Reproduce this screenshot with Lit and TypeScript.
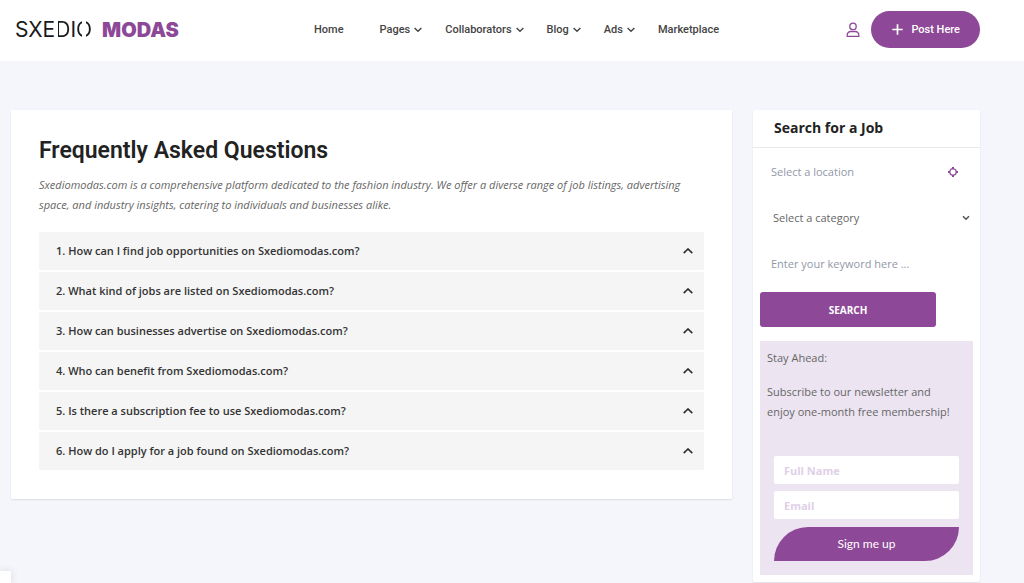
import { LitElement, html, css, svg } from "lit";
import { customElement, property } from "lit/decorators.js";
import { classMap } from "lit/directives/class-map.js";

interface NavEntry {
  label: string;
  menu?: boolean;
}

const NAV: NavEntry[] = [
  { label: "Home" },
  { label: "Pages", menu: true },
  { label: "Collaborators", menu: true },
  { label: "Blog", menu: true },
  { label: "Ads", menu: true },
  { label: "Marketplace" },
];

const QUESTIONS = [
  "1. How can I find job opportunities on Sxediomodas.com?",
  "2. What kind of jobs are listed on Sxediomodas.com?",
  "3. How can businesses advertise on Sxediomodas.com?",
  "4. Who can benefit from Sxediomodas.com?",
  "5. Is there a subscription fee to use Sxediomodas.com?",
  "6. How do I apply for a job found on Sxediomodas.com?",
];

const chevronDown = svg`<path d="M0.6 1 4 4.3 7.4 1" fill="none" stroke="currentColor" stroke-width="1.4"/>`;

@customElement("site-header")
export class SiteHeader extends LitElement {
  static styles = css`
    :host {
      display: block;
      background: #fff;
    }
    .bar {
      display: flex;
      align-items: center;
      height: 61px;
      padding: 0 44px 2px 15px;
      box-sizing: border-box;
    }
    a {
      color: inherit;
      text-decoration: none;
    }
    .logo {
      display: flex;
      align-items: center;
      gap: 10px;
      width: 299px;
      white-space: nowrap;
    }
    .thin {
      font: 400 21px/24px Inter, sans-serif;
      color: #1a1a1a;
    }
    /* The D loses its stem and the O is split in two, as in the brand mark. */
    .open,
    .split {
      color: transparent;
      background-clip: text;
      -webkit-background-clip: text;
    }
    .open {
      background-image: linear-gradient(90deg, transparent 22%, #1a1a1a 22%);
    }
    .split {
      background-image: linear-gradient(90deg, #1a1a1a 40%, transparent 40%, transparent 60%, #1a1a1a 60%);
    }
    .heavy {
      font: 900 20px/24px Inter, sans-serif;
      color: #8d4897;
    }
    nav {
      display: flex;
      gap: 23px;
      padding-top: 1px;
      font: 500 11px/16px Roboto, sans-serif;
      color: #444;
      white-space: nowrap;
    }
    .entry {
      display: flex;
      align-items: center;
      gap: 4px;
    }
    .first {
      margin-right: 13px;
    }
    .chevron {
      width: 8px;
      height: 6px;
    }
    .actions {
      display: flex;
      align-items: center;
      gap: 11px;
      margin-left: auto;
      color: #8d4897;
    }
    .account {
      display: flex;
    }
    .post {
      display: flex;
      align-items: center;
      justify-content: center;
      gap: 8px;
      height: 37px;
      padding: 0 20px 0 21px;
      border: 0;
      border-radius: 19px;
      background: #8d4897;
      color: #fff;
      font: 500 11px/16px Roboto, sans-serif;
      white-space: nowrap;
    }
  `;

  render() {
    return html`
      <header class="bar">
        <a class="logo" href="#">
          <span class="thin">SXE<span class="open">D</span>I<span class="split">O</span></span>
          <span class="heavy">MODAS</span>
        </a>
        <nav>
          ${NAV.map(
            (n, i) => html`<a class=${classMap({ entry: true, first: i === 0 })} href="#"
              >${n.label}${n.menu
                ? html`<svg class="chevron" viewBox="0 0 8 6" aria-hidden="true">${chevronDown}</svg>`
                : ""}</a
            >`
          )}
        </nav>
        <div class="actions">
          <a class="account" href="#" aria-label="Account">
            <svg width="14" height="16" viewBox="0 0 14 16" fill="none" stroke="currentColor" stroke-width="1.3">
              <circle cx="7" cy="4.4" r="3.2" />
              <path d="M1.2 14.4v-1.3a3.6 3.6 0 0 1 3.6-3.6h4.4a3.6 3.6 0 0 1 3.6 3.6v1.3z" stroke-linejoin="round" />
            </svg>
          </a>
          <button class="post">
            <svg width="11" height="11" viewBox="0 0 11 11" stroke="currentColor" stroke-width="1.7" aria-hidden="true">
              <path d="M5.5 0.3v10.4M0.3 5.5h10.4" />
            </svg>
            Post Here
          </button>
        </div>
      </header>
    `;
  }
}

@customElement("faq-item")
export class FaqItem extends LitElement {
  @property() question = "";

  static styles = css`
    :host {
      display: block;
    }
    .row {
      display: flex;
      align-items: center;
      justify-content: space-between;
      width: 100%;
      height: 38px;
      padding: 0 11px 0 17px;
      border: 0;
      border-radius: 1px;
      background: #f5f5f5;
      color: #333;
      font: 600 11px/18px "Open Sans", sans-serif;
      text-align: left;
    }
  `;

  render() {
    return html`
      <button class="row" aria-expanded="false">
        <span>${this.question}</span>
        <svg width="10" height="6" viewBox="0 0 10 6" aria-hidden="true">
          <path d="M0.7 5.2 5 1 9.3 5.2" fill="none" stroke="currentColor" stroke-width="1.7" />
        </svg>
      </button>
    `;
  }
}

@customElement("job-search")
export class JobSearch extends LitElement {
  static styles = css`
    :host {
      display: block;
      background: #fff;
      border-radius: 2px;
      box-shadow: 0 1px 2px rgba(0, 0, 0, 0.1);
      padding-bottom: 7px;
      font-family: "Open Sans", sans-serif;
    }
    h2 {
      margin: 0;
      padding: 8px 21px 9px;
      border-bottom: 1px solid #e9e9ec;
      font: 700 14px/20px "Open Sans", sans-serif;
      color: #222;
    }
    form {
      margin: 0;
    }
    .search {
      display: flex;
      flex-direction: column;
      padding: 1px 7px 0;
    }
    .field {
      display: flex;
      align-items: center;
      height: 46px;
      padding: 0 14px 0 11px;
      color: #8d4897;
    }
    .pick {
      padding: 0 3px 0 13px;
      color: #555;
    }
    .control {
      flex: 1;
      min-width: 0;
      padding: 0;
      border: 0;
      outline: 0;
      background: transparent;
      appearance: none;
      font: 400 11px/18px "Open Sans", sans-serif;
      color: #666;
    }
    .control::placeholder {
      color: #9297a8;
      opacity: 1;
    }
    .submit {
      height: 35px;
      margin: 5px 37px 0 0;
      border: 0;
      border-radius: 3px;
      background: #8d4897;
      color: #fff;
      font: 700 10px/16px "Open Sans", sans-serif;
    }
    .news {
      display: flex;
      flex-direction: column;
      margin: 14px 7px 0;
      padding: 7px 14px 14px;
      background: #ece4f1;
    }
    .copy {
      margin: 0 0 34px -7px;
      font: 400 11px/20px "Open Sans", sans-serif;
      color: #666;
    }
    .copy p {
      margin: 0 0 14px;
    }
    .copy p:last-child {
      margin: 0;
    }
    .box {
      height: 28px;
      margin-bottom: 7px;
      padding: 0 10px;
      border: 0;
      border-radius: 2px;
      background: #fff;
      font: 700 11px/18px "Open Sans", sans-serif;
      box-sizing: border-box;
    }
    .box::placeholder {
      color: #e0d0e7;
      opacity: 1;
    }
    .join {
      height: 34px;
      margin-top: 1px;
      border: 0;
      border-radius: 34px 0;
      background: #8d4897;
      color: #fff;
      font: 400 12px/18px Lato, sans-serif;
    }
  `;

  render() {
    return html`
      <h2>Search for a Job</h2>
      <form class="search" @submit=${(e: Event) => e.preventDefault()}>
        <div class="field">
          <input class="control" placeholder="Select a location" aria-label="Select a location" />
          <svg width="12" height="12" viewBox="0 0 12 12" fill="none" stroke="currentColor" aria-hidden="true">
            <circle cx="6" cy="6" r="3.3" stroke-width="1.3" stroke-dasharray="3.5 1.68" stroke-dashoffset="-0.84" />
            <path d="M6 1v2.4M6 8.6V11M1 6h2.4M8.6 6H11" stroke-width="2" />
          </svg>
        </div>
        <div class="field pick">
          <select class="control" aria-label="Select a category">
            <option>Select a category</option>
          </select>
          <svg width="8" height="6" viewBox="0 0 8 6" aria-hidden="true">
            <path d="M1 1.2 4 4.2 7 1.2" fill="none" stroke="currentColor" stroke-width="1.6" />
          </svg>
        </div>
        <div class="field">
          <input class="control" placeholder="Enter your keyword here ..." aria-label="Keyword" />
        </div>
        <button class="submit">SEARCH</button>
      </form>
      <form class="news" @submit=${(e: Event) => e.preventDefault()}>
        <div class="copy">
          <p>Stay Ahead:</p>
          <p>Subscribe to our newsletter and enjoy one-month free membership!</p>
        </div>
        <input class="box" placeholder="Full Name" aria-label="Full Name" />
        <input class="box" type="email" placeholder="Email" aria-label="Email" />
        <button class="join">Sign me up</button>
      </form>
    `;
  }
}

@customElement("app-root")
export class AppRoot extends LitElement {
  static styles = css`
    :host {
      display: block;
      min-height: 100vh;
      background: #f5f6fb;
    }
    main {
      display: grid;
      grid-template-columns: minmax(0, 1fr) 227px;
      gap: 21px;
      align-items: start;
      padding: 49px 44px 0 11px;
    }
    .card {
      padding: 25px 28px 29px;
      background: #fff;
      border-radius: 1px;
      box-shadow: 0 1px 2px rgba(0, 0, 0, 0.1);
    }
    h1 {
      margin: 0 0 9px;
      font: 600 23px/31px Roboto, sans-serif;
      color: #222;
    }
    .intro {
      margin: 0 0 17px;
      font: italic 400 11px/20px "Open Sans", sans-serif;
      color: #666;
    }
    .list {
      display: grid;
      gap: 2px;
    }
    .dock {
      position: fixed;
      left: 0;
      bottom: 0;
      width: 11px;
      height: 12px;
      background: #fff;
      border-top-right-radius: 1px;
      box-shadow: 0 0 8px rgba(0, 0, 0, 0.12);
    }
  `;

  render() {
    return html`
      <site-header></site-header>
      <main>
        <section class="card">
          <h1>Frequently Asked Questions</h1>
          <p class="intro">
            Sxediomodas.com is a comprehensive platform dedicated to the fashion industry. We offer a diverse range of
            job listings, advertising space, and industry insights, catering to individuals and businesses alike.
          </p>
          <div class="list">${QUESTIONS.map((q) => html`<faq-item .question=${q}></faq-item>`)}</div>
        </section>
        <job-search></job-search>
      </main>
      <div class="dock"></div>
    `;
  }
}
